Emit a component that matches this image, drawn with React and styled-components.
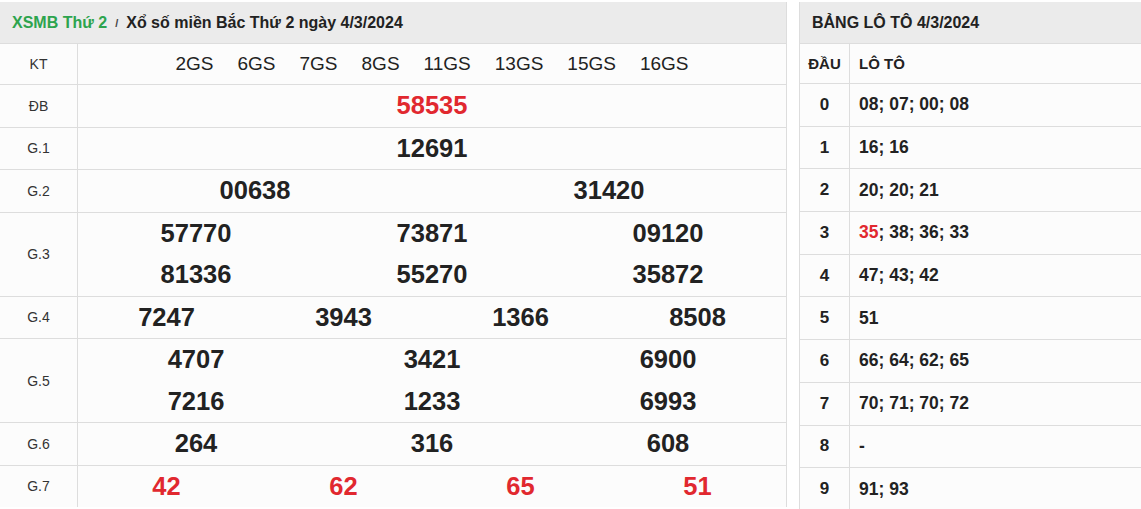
import React from "react"
import styled, { createGlobalStyle } from "styled-components"

const GlobalStyle = createGlobalStyle`
  body {
    margin: 0;
    background: #ffffff;
    font-family: "Liberation Sans", Arial, sans-serif;
    color: #222;
  }
`

const Page = styled.div`
  display: flex;
  align-items: flex-start;
  gap: 12px;
  width: 1141px;
  padding-top: 2px;
`

const Panel = styled.div`
  width: ${(p) => p.width}px;
  flex: none;
  background: #fcfcfc;
  border-left: ${(p) => (p.leftBorder ? "1px solid #ddd" : "none")};
  border-right: 1px solid #ddd;
`

const PanelHeader = styled.div`
  height: 41px;
  display: flex;
  align-items: center;
  padding-left: ${(p) => p.pad}px;
  background: #ebebeb;
  border-bottom: 1px solid #ddd;
  font-size: 16px;
  font-weight: 700;
  color: #222;
`

const Crumb = styled.span`
  color: #2da44e;
`

const Slash = styled.span`
  margin: 0 8px;
  font-size: 11px;
  color: #444;
`

const Row = styled.div`
  display: grid;
  grid-template-columns: 78px 1fr;
  border-bottom: 1px solid #ddd;
  &:last-child {
    border-bottom: none;
  }
`

const Label = styled.div`
  display: flex;
  align-items: center;
  justify-content: center;
  border-right: 1px solid #ddd;
  font-size: 14px;
  color: #333;
`

const Values = styled.div`
  display: grid;
  grid-template-columns: repeat(${(p) => p.cols}, 1fr);
`

const Num = styled.div`
  text-align: center;
  height: 41.5px;
  line-height: 41.5px;
  font-size: 25.5px;
  font-weight: 700;
  color: ${(p) => (p.red ? "#e1282f" : "#222")};
`

const Machines = styled.div`
  display: flex;
  justify-content: center;
  gap: 24px;
  height: 40px;
  line-height: 40px;
  font-size: 19px;
  color: #222;
`

const LotoRow = styled.div`
  display: grid;
  grid-template-columns: 50px 1fr;
  height: ${(p) => p.h}px;
  border-bottom: 1px solid #ddd;
  &:last-child {
    border-bottom: none;
  }
`

const Head = styled.div`
  display: flex;
  align-items: center;
  justify-content: center;
  border-right: 1px solid #ddd;
  font-size: ${(p) => (p.small ? 15 : 17)}px;
  font-weight: 700;
`

const LotoList = styled.div`
  display: flex;
  align-items: center;
  padding-left: 9px;
  font-size: ${(p) => (p.small ? 15 : 17.5)}px;
  font-weight: 700;
  color: #222;
`

const Red = styled.span`
  color: #e1282f;
`

const prizes = [
  { label: "ĐB", cols: 1, nums: ["58535"], red: true },
  { label: "G.1", cols: 1, nums: ["12691"] },
  { label: "G.2", cols: 2, nums: ["00638", "31420"] },
  { label: "G.3", cols: 3, nums: ["57770", "73871", "09120", "81336", "55270", "35872"] },
  { label: "G.4", cols: 4, nums: ["7247", "3943", "1366", "8508"] },
  { label: "G.5", cols: 3, nums: ["4707", "3421", "6900", "7216", "1233", "6993"] },
  { label: "G.6", cols: 3, nums: ["264", "316", "608"] },
  { label: "G.7", cols: 4, nums: ["42", "62", "65", "51"], red: true },
]

const machines = ["2GS", "6GS", "7GS", "8GS", "11GS", "13GS", "15GS", "16GS"]

const loto = [
  ["08", "07", "00", "08"],
  ["16", "16"],
  ["20", "20", "21"],
  ["35", "38", "36", "33"],
  ["47", "43", "42"],
  ["51"],
  ["66", "64", "62", "65"],
  ["70", "71", "70", "72"],
  [],
  ["91", "93"],
]

const App = () => {
  return (
    <>
      <GlobalStyle />
      <Page>
        <Panel width={786}>
          <PanelHeader pad={12}>
            <Crumb>XSMB Thứ 2</Crumb>
            <Slash>/</Slash>
            Xổ số miền Bắc Thứ 2 ngày 4/3/2024
          </PanelHeader>
          <Row>
            <Label>KT</Label>
            <Machines>
              {machines.map((m) => (
                <span key={m}>{m}</span>
              ))}
            </Machines>
          </Row>
          {prizes.map((p) => (
            <Row key={p.label}>
              <Label>{p.label}</Label>
              <Values cols={p.cols}>
                {p.nums.map((n, i) => (
                  <Num key={i} red={p.red}>
                    {n}
                  </Num>
                ))}
              </Values>
            </Row>
          ))}
        </Panel>
        <Panel width={343} leftBorder>
          <PanelHeader pad={12}>BẢNG LÔ TÔ 4/3/2024</PanelHeader>
          <LotoRow h={39}>
            <Head small>ĐẦU</Head>
            <LotoList small>LÔ TÔ</LotoList>
          </LotoRow>
          {loto.map((list, d) => (
            <LotoRow key={d} h={41.7}>
              <Head>{d}</Head>
              <LotoList>
                {list.length === 0
                  ? "-"
                  : list.map((n, i) => (
                      <React.Fragment key={i}>
                        {i > 0 && "; "}
                        {d === 3 && i === 0 ? <Red>{n}</Red> : n}
                      </React.Fragment>
                    ))}
              </LotoList>
            </LotoRow>
          ))}
        </Panel>
      </Page>
    </>
  )
}

export default App
